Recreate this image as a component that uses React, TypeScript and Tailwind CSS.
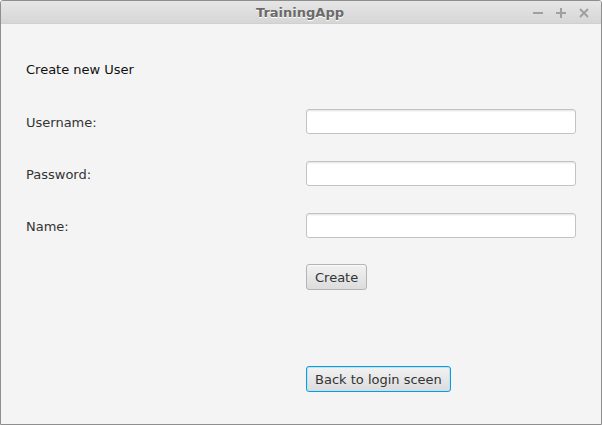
import React from "react";

const font = { fontFamily: '"DejaVu Sans", "Liberation Sans", sans-serif' };

function Field() {
  return (
    <div className="w-[270px] h-[25px] rounded-[3px] border border-[#c3c3c3] bg-white shadow-[inset_0_2px_2px_-1px_rgba(0,0,0,0.12)]" />
  );
}

export default function App() {
  return (
    <div
      className="w-[602px] h-[425px] flex flex-col border border-[#8e8e8e] rounded-tl-[3px] rounded-tr-[3px] bg-[#f4f4f4] overflow-hidden"
      style={font}
    >
      <div className="h-[23px] shrink-0 relative flex items-center justify-center bg-gradient-to-b from-[#e6e6e6] to-[#d6d6d6] border-b border-[#d0d0d0]">
        <span className="text-[13px] font-bold text-[#6a6a6a] [text-shadow:0_1px_0_#ffffff] -ml-[2px] pt-[1px]">
          TrainingApp
        </span>
        <div className="absolute right-[12px] top-0 h-full flex items-center gap-[13px]">
          <span className="w-[10px] h-[2px] bg-[#a0a0a0] mt-[2px]" />
          <svg width="10" height="10" viewBox="0 0 10 10" className="mt-[1px]">
            <rect x="4" y="0" width="2" height="10" fill="#a0a0a0" />
            <rect x="0" y="4" width="10" height="2" fill="#a0a0a0" />
          </svg>
          <svg width="10" height="10" viewBox="0 0 10 10" className="mt-[1px]">
            <path d="M1 1 L9 9 M9 1 L1 9" stroke="#a0a0a0" strokeWidth="2" />
          </svg>
        </div>
      </div>
      <div className="flex-1 flex flex-col pl-[25px] text-[13px]">
        <div className="mt-[38px] h-[16px] leading-[16px] text-[#111]">Create new User</div>
        <div className="mt-[31px] flex flex-col gap-[27px]">
          {["Username:", "Password:", "Name:"].map((l) => (
            <div key={l} className="flex items-center h-[25px]">
              <div className="w-[280px] text-[#333] leading-[16px] pt-[2px]">{l}</div>
              <Field />
            </div>
          ))}
        </div>
        <div className="mt-[26px] pl-[280px] flex">
          <button className="h-[26px] px-[8px] pt-[1px] rounded-[3px] border border-[#b4b4b4] bg-gradient-to-b from-[#f2f2f2] to-[#dcdcdc] text-[#333] text-[13px] leading-[16px] shadow-[inset_0_1px_0_#fafafa]">
            Create
          </button>
        </div>
        <div className="mt-[76px] pl-[280px] flex">
          <button className="h-[26px] px-[8px] pt-[1px] rounded-[3px] border border-[#0a9ed6] bg-gradient-to-b from-[#f2f2f2] to-[#dcdcdc] text-[#333] text-[13px] leading-[16px] shadow-[inset_0_0_0_1px_#bfe3f2]">
            Back to login sceen
          </button>
        </div>
      </div>
    </div>
  );
}
